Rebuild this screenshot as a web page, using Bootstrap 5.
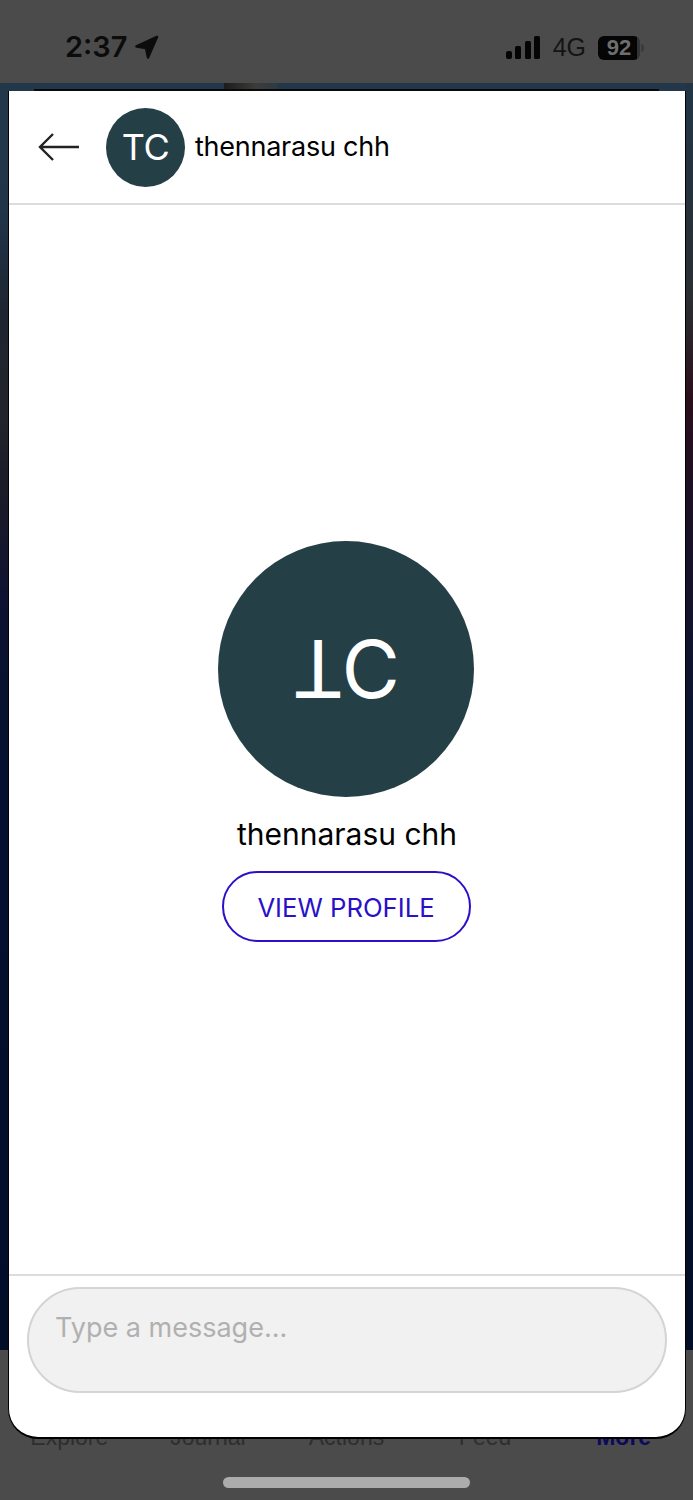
<!DOCTYPE html>
<html lang="en">
<head>
    <meta charset="UTF-8">
    <meta name="viewport" content="width=device-width, initial-scale=1.0">
    <title>Chat</title>
    <link rel="stylesheet" href="https://cdn.jsdelivr.net/npm/bootstrap@5.3.0/dist/css/bootstrap.min.css">
    <style>
        html, body {
            height: 1500px;
            overflow: hidden;
        }
        body {
            background: #4b4b4b;
            font-family: Inter, "Liberation Sans", sans-serif;
        }
        .status-bar {
            height: 83px;
            padding: 0 53px 0 65px;
            color: #0c0c0c;
        }
        .clock {
            font-family: Inter, sans-serif;
            font-size: 29px;
            font-weight: 600;
            line-height: 1;
            margin-top: 10px;
        }
        .net {
            font-family: "Liberation Sans", sans-serif;
            font-size: 25px;
            line-height: 1;
            color: #141414;
        }
        .battery {
            position: relative;
            width: 42px;
            height: 24px;
            background: linear-gradient(90deg, #050505 92%, #333 92%);
            color: #6e6e6e;
            border-radius: 6px;
            font-family: "Liberation Sans", sans-serif;
            font-size: 22px;
            font-weight: 700;
            line-height: 24px;
            text-align: center;
        }
        .battery::after {
            content: "";
            position: absolute;
            top: 8px;
            right: -4px;
            width: 3px;
            height: 8px;
            background: #3c3c3c;
            border-radius: 0 3px 3px 0;
        }
        .backdrop {
            height: 1267px;
            background:
                linear-gradient(180deg, #223545 1%, #2a2e32 17%, #2a0e1c 25%, #1c1024 33%, #0c1530 49%, #020d28 100%) right top / 7px 100% no-repeat,
                linear-gradient(180deg, #22384a 0, #20354a 10%, #1e2530 18%, #22242c 26%, #1b1a28 33%, #0c1230 41%, #031030 57%, #020d28 100%);
        }
        .sheet-shadow {
            height: 8px;
            padding-top: 6px;
        }
        .shadow-line {
            height: 2px;
            margin: 0 34px;
            background: #0a0a0a;
        }
        .shadow-peek {
            position: absolute;
            top: 83px;
            left: 224px;
            width: 54px;
            height: 6px;
            background: linear-gradient(90deg, #1c1c1c, #3c3c3a 60%, #2c3a45);
        }
        .tab-labels {
            position: absolute;
            top: 1424px;
            left: 0;
            right: 0;
            font-family: "Liberation Sans", sans-serif;
            font-size: 23px;
            line-height: 26px;
            color: #2e2e2e;
        }
        .tab-labels span {
            flex: 1 1 0;
            text-align: center;
        }
        .tab-labels .tab-on {
            color: #0b0a5c;
            font-weight: 700;
        }
        .home-bar {
            position: absolute;
            top: 1477px;
            left: 223px;
            width: 247px;
            height: 11px;
            background: #acacac;
            border-radius: 6px;
        }
        .sheet {
            position: absolute;
            top: 91px;
            left: 8px;
            width: 678px;
            height: 1348px;
            background: #fff;
            border: solid #000;
            border-width: 0 1px 2px 1px;
            border-radius: 0 0 30px 30px;
        }
        .chat-head {
            height: 114px;
            padding: 0 0 0 29px;
            border-bottom: 2px solid #dcdcdc;
        }
        .back-btn {
            width: 41px;
            margin-right: 27px;
        }
        .avatar-sm {
            width: 79px;
            height: 79px;
            background: #243f46;
            color: #fff;
            font-size: 36px;
            line-height: 1;
            margin-right: 10px;
            letter-spacing: -.5px;
        }
        .head-name {
            font-size: 27px;
            color: #000;
            letter-spacing: -.25px;
            margin-top: 1px;
        }
        .chat-body {
            height: 1069px;
            padding-top: 336px;
        }
        .avatar-lg {
            width: 256px;
            height: 256px;
            margin-right: 2px;
            background: #243f46;
            color: #fff;
            font-size: 80px;
            font-weight: 400;
            line-height: 1;
        }
        .flipped {
            display: inline-block;
            transform: scaleY(-1);
        }
        .body-name {
            font-size: 30px;
            line-height: 38px;
            color: #000;
            margin-top: 18px;
        }
        .profile-btn {
            width: 249px;
            height: 71px;
            margin-top: 18px;
            margin-right: 2px;
            border: 2px solid #2a10c8;
            border-radius: 36px;
            color: #2a10c8;
            background: #fff;
            font-size: 25.7px;
            padding: 3px 0 0;
        }
        .chat-foot {
            border-top: 2px solid #dcdcdc;
            padding: 11px 18px 0 18px;
        }
        .msg-input {
            height: 106px;
            background: #f1f1f1;
            border: 2px solid #d4d4d4;
            border-radius: 53px;
            padding: 21px 26px;
            font-size: 27px;
            line-height: 36px;
            color: #b0b0b0;
        }
    </style>
</head>
<body class="position-relative">

<!-- Phone status bar -->
<div class="status-bar d-flex justify-content-between align-items-center">
    <div class="d-flex align-items-center">
        <span class="clock">2:37</span>
        <svg class="ms-2" width="24" height="24" viewBox="0 0 24 24" style="margin-top:10px"><path d="M22 2 L1.5 11.5 L11 13 L13 22.5 Z" fill="#0c0c0c" stroke="#0c0c0c" stroke-width="2.5" stroke-linejoin="round"/></svg>
    </div>
    <div class="d-flex align-items-center gap-2" style="margin-top:12px">
        <svg class="me-1" width="36" height="24" viewBox="0 0 36 24"><rect x="1" y="15" width="6" height="8" rx="2" fill="#050505"/><rect x="10" y="10" width="6" height="13" rx="1.5" fill="#050505"/><rect x="20" y="5" width="6" height="18" rx="1.5" fill="#050505"/><rect x="29" y="0" width="6" height="23" rx="1.5" fill="#050505"/></svg>
        <span class="net">4G</span>
        <span class="battery ms-1">92</span>
    </div>
</div>

<div class="backdrop">
    <div class="sheet-shadow"><div class="shadow-line"></div></div>
    <div class="shadow-peek"></div>
</div>

<!-- Tab bar behind the sheet -->
<div class="tab-labels d-flex">
    <span>Explore</span>
    <span>Journal</span>
    <span>Actions</span>
    <span>Feed</span>
    <span class="tab-on">More</span>
</div>
<div class="home-bar"></div>

<!-- Chat sheet -->
<div class="sheet">
    <div class="chat-head d-flex align-items-center">
        <svg class="back-btn" height="28" viewBox="0 0 41 28" fill="none" stroke="#222" stroke-width="2.4"><path d="M41 14 H2 M15 1 L2 14 L15 27"/></svg>
        <div class="avatar-sm rounded-circle d-flex align-items-center justify-content-center">TC</div>
        <span class="head-name">thennarasu chh</span>
    </div>

    <div class="chat-body d-flex flex-column align-items-center">
        <div class="avatar-lg rounded-circle d-flex align-items-center justify-content-center">
            <span class="flipped">TC</span>
        </div>
        <div class="body-name">thennarasu chh</div>
        <button class="btn profile-btn">VIEW PROFILE</button>
    </div>

    <div class="chat-foot">
        <div class="msg-input">Type a message...</div>
    </div>
</div>

<script src="https://cdn.jsdelivr.net/npm/bootstrap@5.3.0/dist/js/bootstrap.bundle.min.js"></script>
</body>
</html>
